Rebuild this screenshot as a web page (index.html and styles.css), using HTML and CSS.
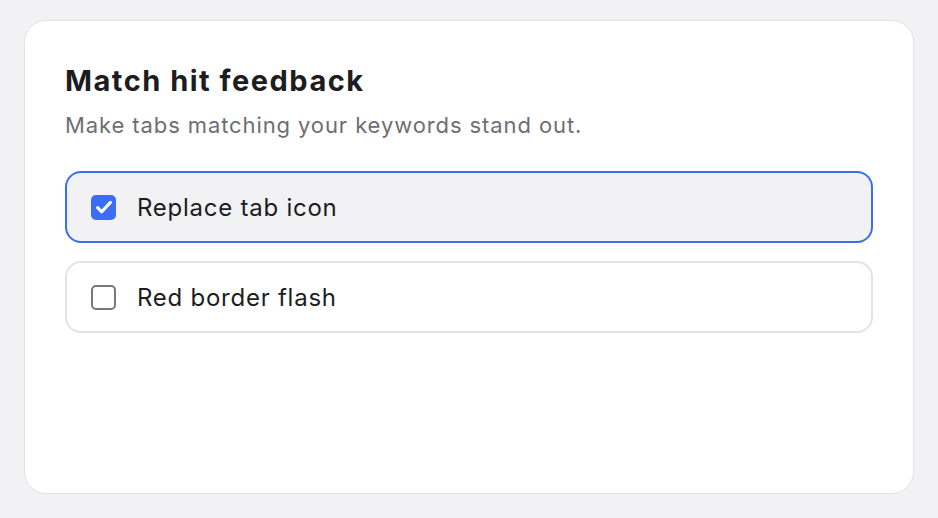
FILE: index.html
```html
<!DOCTYPE html>
<html lang="en">
<head>
<meta charset="utf-8">
<title>Match hit feedback</title>
<link rel="stylesheet" href="styles.css">
</head>
<body>
<section class="card">
  <h2 class="title">Match hit feedback</h2>
  <p class="subtitle">Make tabs matching your keywords stand out.</p>
  <div class="options">
    <label class="option option--checked">
      <span class="box box--checked">
        <svg viewBox="0 0 24 24" width="22" height="22" aria-hidden="true"><path d="M5 12.8l4.6 4.4L19 7" fill="none" stroke="#fff" stroke-width="3.4" stroke-linecap="round" stroke-linejoin="round"/></svg>
      </span>
      <span class="label">Replace tab icon</span>
    </label>
    <label class="option">
      <span class="box"></span>
      <span class="label">Red border flash</span>
    </label>
  </div>
</section>
</body>
</html>
```
FILE: styles.css
```css
* { box-sizing: border-box; }
html, body { margin: 0; padding: 0; }
body {
  background: #f2f2f4;
  font-family: "Inter", "Noto Sans", sans-serif;
  padding: 20px 24px;
  width: 938px;
  height: 518px;
}
.card {
  width: 890px;
  height: 474px;
  background: #ffffff;
  border: 1.5px solid #e2e2e6;
  border-radius: 22px;
  padding: 43px 40px 40px 40px;
}
.title {
  margin: 0;
  font-size: 29px;
  line-height: 34px;
  font-weight: 700;
  color: #1d1d1f;
  letter-spacing: 1.5px;
}
.subtitle {
  margin: 14px 0 0 0;
  font-size: 22px;
  line-height: 26px;
  color: #6e6e73;
  letter-spacing: 0.9px;
}
.options {
  margin-top: 33px;
  display: flex;
  flex-direction: column;
  gap: 18px;
}
.option {
  display: flex;
  align-items: center;
  gap: 21px;
  height: 72px;
  padding: 0 24px;
  border: 2px solid #e3e3e7;
  border-radius: 16px;
  background: #ffffff;
}
.option--checked {
  border-color: #3a6ef0;
  background: #f2f2f5;
}
.box {
  width: 25px;
  height: 25px;
  border: 2px solid #77777c;
  border-radius: 5px;
  background: #fff;
  display: flex;
  align-items: center;
  justify-content: center;
  flex: none;
}
.box--checked {
  border: none;
  background: #3b6ef6;
}
.label {
  font-size: 24px;
  color: #1d1d1f;
  letter-spacing: 0.75px;
}
```
